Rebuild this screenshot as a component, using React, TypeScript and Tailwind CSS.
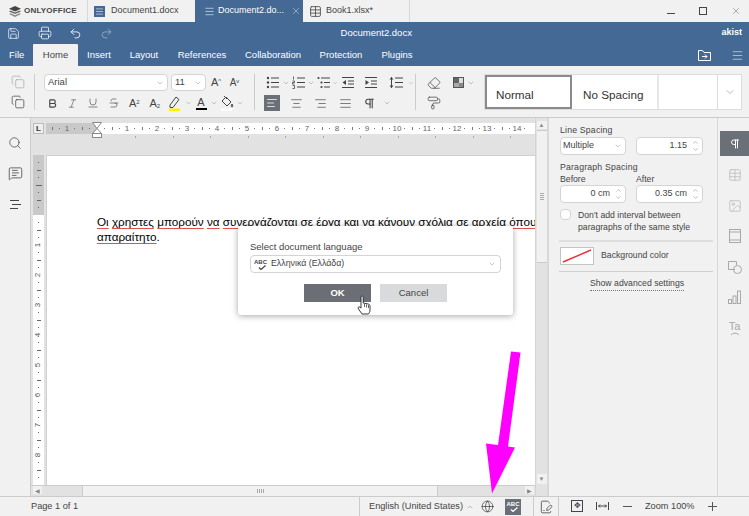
import type { ReactNode } from "react"
import {
  AlignCenter,
  AlignJustify,
  AlignLeft,
  AlignRight,
  Bold,
  ChevronDown,
  ChevronUp,
  Copy,
  Eraser,
  FilePenLine,
  Globe,
  Image,
  Italic,
  Menu,
  MessageSquareText,
  PaintRoller,
  Pilcrow,
  Printer,
  Redo2,
  Save,
  Search,
  Strikethrough,
  Table,
  Underline,
  Undo2,
  X,
} from "lucide-react"

const iconProps = { size: 14, strokeWidth: 1.25, color: "#444" }

function Caret({ className = "" }: { className?: string }) {
  return <ChevronDown size={8} strokeWidth={1.25} color="#777" className={className} />
}

function Cell({ w, children, active }: { w: string; children?: ReactNode; active?: boolean }) {
  return (
    <div className={`flex h-4 shrink-0 items-center justify-center ${w} ${active ? "bg-[#6b7078]" : ""}`}>
      {children}
    </div>
  )
}

function SpellIcon({ light }: { light?: boolean }) {
  const color = light ? "#fff" : "#444"
  return (
    <div className="flex w-[13px] flex-col items-center">
      <span className={`text-[6px] font-bold leading-[6px] ${light ? "text-white" : "text-[#444]"}`}>ABC</span>
      <svg width="8" height="5" viewBox="0 0 8 5" fill="none" stroke={color} strokeWidth="1.2" className="ml-[3px]">
        <path d="M1 2.500L3 4.500L7.500 0.500" />
      </svg>
    </div>
  )
}

function ListIcon({ kind }: { kind: "bullet" | "number" | "multi" | "dec" | "inc" | "spacing" }) {
  return (
    <svg width="14" height="13" viewBox="0 0 14 13" stroke="#444" fill="#444" strokeWidth="1">
      {kind === "bullet" && (
        <>
          <circle cx="2" cy="2" r="1.2" stroke="none" />
          <circle cx="2" cy="6.5" r="1.2" stroke="none" />
          <circle cx="2" cy="11" r="1.2" stroke="none" />
          <path d="M5 2h8M5 6.5h8M5 11h8" />
        </>
      )}
      {kind === "number" && (
        <>
          <path d="M1.5 0.5v3M0.5 5h2v1.5h-2V8h2M0.5 9.5h2V12.5h-2" strokeWidth="0.8" fill="none" />
          <path d="M5 2h8M5 6.5h8M5 11h8" />
        </>
      )}
      {kind === "multi" && (
        <>
          <circle cx="1.5" cy="2" r="1.1" stroke="none" />
          <circle cx="4.5" cy="6.5" r="1.1" stroke="none" />
          <circle cx="4.5" cy="11" r="1.1" stroke="none" />
          <path d="M4 2h9M7 6.5h6M7 11h6" />
        </>
      )}
      {kind === "dec" && (
        <>
          <path d="M1 1.5h12M7 5h6M7 8h6M1 11.5h12" />
          <path d="M5 4v5L1.5 6.5z" stroke="none" />
        </>
      )}
      {kind === "inc" && (
        <>
          <path d="M1 1.5h12M7 5h6M7 8h6M1 11.5h12" />
          <path d="M1.5 4v5L5 6.5z" stroke="none" />
        </>
      )}
      {kind === "spacing" && (
        <>
          <path d="M6 2h8M6 6.5h8M6 11h8M2.5 1v11" />
          <path d="M0.5 3.5L2.5 1l2 2.5zM0.5 9.5L2.5 12l2-2.5z" stroke="none" />
        </>
      )}
    </svg>
  )
}

function Toolbar() {
  return (
    <div className="flex h-[52px] shrink-0 items-start border-b border-[#cbcbcb] bg-[#f1f1f1] pt-2">
      <div className="flex w-[34px] shrink-0 flex-col items-center gap-[4px] pl-0.5">
        <Cell w="w-5"><Copy size={14} strokeWidth={1.25} color="#aaa" /></Cell>
        <Cell w="w-5"><Copy size={14} strokeWidth={1.25} color="#444" /></Cell>
      </div>
      <div className="h-9 w-px shrink-0 bg-[#cbcbcb]" />

      <div className="flex w-[219px] shrink-0 flex-col gap-[4px] pl-[7px]">
        <div className="flex h-[17px] items-center">
          <div className="ml-[2px] flex h-[17px] w-[124px] items-center justify-between rounded-sm border border-[#d4d4d4] bg-white pl-[3px] pr-[3px] text-[9.500px] text-[#444]">
            Arial <Caret />
          </div>
          <div className="ml-[3px] flex h-[17px] w-[35px] items-center justify-between rounded-sm border border-[#d4d4d4] bg-white pl-[3px] pr-[3px] text-[9.500px] text-[#444]">
            11 <Caret />
          </div>
          <Cell w="w-[20px]"><span className="text-[11px] text-[#444]">A<sup className="text-[6px]">^</sup></span></Cell>
          <Cell w="w-[17px]"><span className="text-[10px] text-[#444]">A<sup className="text-[6px]">v</sup></span></Cell>
        </div>
        <div className="flex h-4 items-center">
          <Cell w="w-[20.5px]"><Bold size={11} strokeWidth={2.5} color="#444" /></Cell>
          <Cell w="w-[20.5px]"><Italic {...iconProps} size={11} /></Cell>
          <Cell w="w-[20.5px]"><Underline {...iconProps} size={12} /></Cell>
          <Cell w="w-[20.5px]"><Strikethrough {...iconProps} size={12} /></Cell>
          <Cell w="w-[20.5px]"><span className="text-[11px] text-[#444]">A<sup className="text-[6px]">2</sup></span></Cell>
          <Cell w="w-[20.5px]"><span className="text-[11px] text-[#444]">A<sub className="text-[6px]">2</sub></span></Cell>
          <Cell w="w-[20px]">
            <svg width="14" height="16" viewBox="0 0 14 16" fill="none" stroke="#444">
              <path d="M2 10l6-8 3 2.5-6 8H2z" />
              <rect x="1" y="13.5" width="11" height="2.5" fill="#fff200" stroke="none" />
            </svg>
          </Cell>
          <Cell w="w-[7px]"><Caret /></Cell>
          <Cell w="w-[18px]">
            <div className="flex flex-col items-center text-[11px] leading-[12px] text-[#444]">
              A
              <div className="h-[2px] w-[11px] bg-black" />
            </div>
          </Cell>
          <Cell w="w-[8px]"><Caret /></Cell>
          <Cell w="w-[18px]">
            <svg width="14" height="16" viewBox="0 0 14 16" fill="none" stroke="#444">
              <path d="M6 2l5 5-4 4-5-5z" />
              <path d="M4 1l3 3M12 9c1 1.5 1 3 0 3s-1-1.500 0-3z" />
              <rect x="1" y="13.5" width="11" height="2.5" fill="#fff" stroke="none" />
            </svg>
          </Cell>
          <Cell w="w-[8px]"><Caret /></Cell>
        </div>
      </div>
      <div className="h-9 w-px shrink-0 bg-[#cbcbcb]" />

      <div className="flex w-[160px] shrink-0 flex-col gap-[4px] pl-[9px]">
        <div className="flex h-[17px] items-center">
          <Cell w="w-[17px]"><ListIcon kind="bullet" /></Cell>
          <Cell w="w-[9px]"><Caret /></Cell>
          <Cell w="w-[17px]"><ListIcon kind="number" /></Cell>
          <Cell w="w-[8px]"><Caret /></Cell>
          <Cell w="w-[17px]"><ListIcon kind="multi" /></Cell>
          <Cell w="w-[6px]"><Caret /></Cell>
          <Cell w="w-[20px]"><ListIcon kind="dec" /></Cell>
          <Cell w="w-[25px]"><ListIcon kind="inc" /></Cell>
          <Cell w="w-[25px]"><ListIcon kind="spacing" /></Cell>
          <Cell w="w-[6px]"><Caret /></Cell>
        </div>
        <div className="flex h-4 items-center">
          <Cell w="w-4" active><AlignLeft size={12} strokeWidth={1.5} color="#fff" /></Cell>
          <div className="w-1 shrink-0" />
          <Cell w="w-[24px]"><AlignCenter {...iconProps} size={13} /></Cell>
          <Cell w="w-[25px]"><AlignRight {...iconProps} size={13} /></Cell>
          <Cell w="w-[24px]"><AlignJustify {...iconProps} size={13} /></Cell>
          <Cell w="w-[25px]"><Pilcrow {...iconProps} size={13} strokeWidth={2} /></Cell>
          <Cell w="w-[10px]"><Caret /></Cell>
        </div>
      </div>
      <div className="h-9 w-px shrink-0 bg-[#cbcbcb]" />

      <div className="flex w-[68px] shrink-0 flex-col gap-[4px] pl-[9px]">
        <div className="flex h-[17px] items-center">
          <Cell w="w-[17px]"><Eraser {...iconProps} /></Cell>
          <div className="w-2 shrink-0" />
          <Cell w="w-[17px]">
            <div className="grid size-[11px] grid-cols-2 border border-[#555] bg-white">
              <div className="bg-[#666]" />
              <div className="bg-[#ddd]" />
              <div className="bg-[#aaa]" />
              <div className="bg-[#888]" />
            </div>
          </Cell>
          <Cell w="w-[8px]"><Caret /></Cell>
        </div>
        <div className="flex h-4 items-center">
          <Cell w="w-[17px]"><PaintRoller {...iconProps} /></Cell>
        </div>
      </div>

      <div className="flex h-[36px] w-[258px] shrink-0 border border-[#dcdcdc] bg-white text-[11.700px] text-[#333]">
        <div className="flex w-[87px] items-center border-2 border-[#8a8a8a] pl-[9px] pt-[5px]">Normal</div>
        <div className="flex w-[87px] items-center border-r-2 border-[#e8e8e8] pl-[11px] pt-[5px]">No Spacing</div>
        <div className="w-[59px] border-r border-[#dcdcdc]" />
        <div className="flex flex-1 items-center justify-center">
          <ChevronDown size={12} strokeWidth={1} color="#777" />
        </div>
      </div>
    </div>
  )
}

function Header() {
  return (
    <div className="shrink-0">
      <div className="flex h-[22px] items-stretch bg-[#f1f1f1] text-[9px] text-[#444]">
        <div className="flex w-[88px] items-center gap-[3px] border-r border-[#d8d8d8] pl-[9px] text-[8px] font-bold tracking-[0.2px]">
          <svg width="12" height="11" viewBox="0 0 12 11" fill="#444">
            <path d="M6 0l6 2.700-6 2.700L0 2.700z" />
            <path d="M1.500 4.500L6 6.500l4.500-2L12 5.400 6 8 0 5.400z" opacity="0.8" />
            <path d="M1.500 7.200L6 9.200l4.500-2L12 8.100 6 11 0 8.100z" opacity="0.6" />
          </svg>
          ONLYOFFICE
        </div>
        <div className="flex w-[107px] items-center gap-[6px] pl-[6px]">
          <div className="flex size-[11px] items-center justify-center bg-[#446995]">
            <Menu size={9} color="#fff" strokeWidth={1.5} />
          </div>
          Document1.docx
        </div>
        <div className="flex w-[108px] items-center bg-[#446995] pl-[9px] text-white">
          <Menu size={11} color="#fff" strokeWidth={1.25} />
          <span className="ml-[3px]">Document2.do...</span>
          <X size={10} strokeWidth={1} color="#fff" className="ml-[7px]" />
        </div>
        <div className="flex w-[107px] items-center gap-[4px] border-r border-[#d8d8d8] pl-[6px]">
          <Table size={13} strokeWidth={1.5} color="#444" />
          Book1.xlsx*
        </div>
        <div className="flex flex-1 items-center justify-end gap-[24px] pr-[8px]">
          <div className="mt-[5px] h-px w-2 bg-[#444]" />
          <div className="size-[8px] border border-[#444]" />
          <X size={10} strokeWidth={1} color="#444" />
        </div>
      </div>

      <div className="flex h-[22px] items-center bg-[#446995] text-[9.500px] text-white">
        <div className="flex w-[122px] items-center">
          <div className="-ml-[2px] flex w-8 justify-center"><Save size={13} strokeWidth={1.25} /></div>
          <div className="flex w-8 justify-center"><Printer size={14} strokeWidth={1.25} /></div>
          <div className="flex w-8 justify-center"><Undo2 size={13} strokeWidth={1.5} /></div>
          <div className="flex w-8 justify-center"><Redo2 size={13} strokeWidth={1.5} color="#9db3cc" /></div>
        </div>
        <div className="flex-1 pr-[91px] text-center font-medium">Document2.docx</div>
        <div className="pr-[7px] text-[9px] font-bold">akist</div>
      </div>

      <div className="flex h-[22px] items-end bg-[#446995] pb-0 text-[9.500px] text-white">
        <div className="flex h-[22px] w-[33px] items-center pl-[9px]">File</div>
        <div className="flex h-[22px] w-[45px] items-center justify-center rounded-t-[1px] bg-[#f1f1f1] text-[#444]">Home</div>
        <div className="flex h-[22px] w-[42px] items-center justify-center">Insert</div>
        <div className="flex h-[22px] w-[48px] items-center justify-center">Layout</div>
        <div className="flex h-[22px] w-[68px] items-center justify-center">References</div>
        <div className="flex h-[22px] w-[74px] items-center justify-center">Collaboration</div>
        <div className="flex h-[22px] w-[62px] items-center justify-center">Protection</div>
        <div className="flex h-[22px] w-[50px] items-center justify-center">Plugins</div>
        <div className="flex h-[22px] flex-1 items-center justify-end gap-[20px] pr-[5px]">
          <svg width="13" height="11" viewBox="0 0 13 11" fill="none" stroke="#fff">
            <path d="M0.500 10.500V0.500h4l1.500 2h6.500v8zM4 6.500h5M7 4.500l2 2-2 2" />
          </svg>
          <Menu size={13} strokeWidth={1} />
        </div>
      </div>
    </div>
  )
}

function RulerSlot({ children }: { children?: ReactNode }) {
  return <div className="flex h-[11px] w-[7.500px] shrink-0 items-center justify-center">{children}</div>
}

function Dot() {
  return <div className="size-px bg-[#777]" />
}

function Bar() {
  return <div className="h-[3px] w-px bg-[#777]" />
}

function HorizontalRuler() {
  const units = Array.from({ length: 14 }, (_, i) => i + 1)
  const stops = Array.from({ length: 11 })
  return (
    <div className="relative w-[489px] text-[8px] leading-[11px] text-[#666]">
      <div className="flex h-[11px] overflow-hidden">
        <div className="flex w-[51px] shrink-0 justify-end bg-[#c9c9c9] pr-[3.750px]">
          <RulerSlot><Bar /></RulerSlot>
          <RulerSlot><Dot /></RulerSlot>
          <RulerSlot>1</RulerSlot>
          <RulerSlot><Dot /></RulerSlot>
          <RulerSlot><Bar /></RulerSlot>
          <RulerSlot><Dot /></RulerSlot>
        </div>
        <div className="flex flex-1 overflow-hidden bg-white">
          <div className="flex w-[11.250px] shrink-0 items-center justify-end pr-[3px]"><Dot /></div>
          {units.map((n) => (
            <div key={n} className="flex shrink-0">
              <RulerSlot><Bar /></RulerSlot>
              <RulerSlot><Dot /></RulerSlot>
              <RulerSlot>{n}</RulerSlot>
              <RulerSlot><Dot /></RulerSlot>
            </div>
          ))}
        </div>
      </div>
      <div className="mt-[2px] flex pl-[89px]">
        {stops.map((_, i) => (
          <div key={i} className="w-[37.500px] shrink-0">
            <div className="h-[2px] w-px bg-[#aaa]" />
          </div>
        ))}
      </div>
      <svg className="absolute -top-[1px] left-[46px]" width="10" height="16" viewBox="0 0 10 16" fill="#fff" stroke="#888">
        <path d="M0.500 0.500h9L5 6.500zM5 6.500L9.500 11.500h-9z" />
        <rect x="0.500" y="11.500" width="9" height="4" />
      </svg>
    </div>
  )
}

function VTick({ w }: { w: string }) {
  return (
    <div className="flex h-[7.500px] items-center justify-center">
      <div className={`h-px bg-[#666] ${w}`} />
    </div>
  )
}

function VerticalRuler() {
  const units = Array.from({ length: 8 }, (_, i) => i + 1)
  return (
    <div className="flex h-[330px] w-[11px] shrink-0 flex-col overflow-hidden bg-white">
      <div className="flex h-[60px] shrink-0 flex-col justify-center bg-[#c9c9c9]">
        <VTick w="w-px" />
        <VTick w="w-[4px]" />
        <VTick w="w-px" />
        <VTick w="w-[6px]" />
        <VTick w="w-px" />
        <VTick w="w-[4px]" />
        <VTick w="w-px" />
      </div>
      <div className="flex min-h-0 flex-1 flex-col pt-[4px]">
        {units.map((n) => (
          <div key={n} className="flex flex-col">
            <VTick w="w-px" />
            <VTick w="w-[4px]" />
            <VTick w="w-px" />
            <div className="flex h-[7.500px] items-center justify-center text-[8px] leading-none text-[#555]">
              <span className="-rotate-90">{n}</span>
            </div>
          </div>
        ))}
        <VTick w="w-px" />
        <VTick w="w-[4px]" />
        <VTick w="w-px" />
      </div>
    </div>
  )
}

function Sp({ children }: { children: ReactNode }) {
  return <span className="underline decoration-[#e0524f] underline-offset-2">{children}</span>
}

function Arrow({ children }: { children: ReactNode }) {
  return <div className="flex items-center justify-center bg-[#f1f1f1] text-[6px] leading-none text-[#888]">{children}</div>
}

function Canvas() {
  return (
    <div className="flex min-w-0 flex-1 bg-[#e2e2e2]">
      <div className="flex min-w-0 flex-1 flex-col">
        <div className="flex h-[37px] shrink-0 items-start pl-[2px] pt-[5px]">
          <div className="flex size-[11px] shrink-0 items-center justify-center border border-[#bbb] bg-[#eee] text-[8px] font-bold leading-none text-[#333]">L</div>
          <div className="ml-[2px]">
            <HorizontalRuler />
          </div>
        </div>
        <div className="flex min-h-0 flex-1 pl-[2px]">
          <VerticalRuler />
          <div className="ml-[2px] min-w-0 flex-1 overflow-hidden whitespace-nowrap border-l border-t border-[#d0d0d0] bg-white pl-[50px] pt-[58px] text-[11.700px] leading-[16px] text-black">
            <div>
              <Sp>Οι</Sp> <Sp>χρηστες</Sp> <Sp>μπορούν</Sp> <Sp>να</Sp> <Sp>συνεργάζονται</Sp> <Sp>σε</Sp> <Sp>έργα</Sp> και <Sp>να</Sp> <Sp>κάνουν</Sp> <Sp>σχόλια</Sp> <Sp>σε</Sp> <Sp>αρχεία</Sp> <Sp>όπου</Sp>
            </div>
            <div className="-mt-px">
              <Sp>απαραίτητο</Sp>.
            </div>
          </div>
        </div>
        <div className="flex h-[11px] shrink-0 items-stretch border-t border-[#cbcbcb] pl-[2px] pr-px">
          <div className="w-[9px]"><Arrow><span className="pt-[2px]">◀</span></Arrow></div>
          <div className="w-10" />
          <div className="flex w-[356px] items-center justify-center border-x border-[#cbcbcb] bg-[#f1f1f1]">
            <div className="flex gap-px">
              <div className="h-1 w-px bg-[#aaa]" />
              <div className="h-1 w-px bg-[#aaa]" />
              <div className="h-1 w-px bg-[#aaa]" />
              <div className="h-1 w-px bg-[#aaa]" />
            </div>
          </div>
          <div className="flex-1" />
          <div className="w-[9px]"><Arrow><span className="pt-[2px]">▶</span></Arrow></div>
        </div>
      </div>
      <div className="flex w-3 shrink-0 flex-col items-center border-l border-[#d4d4d4] pb-3 pt-[3px]">
        <div className="flex h-[8px] w-[10px] items-center justify-center bg-[#f1f1f1] text-[6px] leading-none text-[#888]">▲</div>
        <div className="mt-px flex h-[133px] w-[10px] flex-col items-center justify-center gap-px border-y border-[#cbcbcb] bg-[#f1f1f1]">
          <div className="h-px w-1 bg-[#aaa]" />
          <div className="h-px w-1 bg-[#aaa]" />
          <div className="h-px w-1 bg-[#aaa]" />
          <div className="h-px w-1 bg-[#aaa]" />
        </div>
        <div className="flex-1" />
        <div className="flex h-[10px] w-[10px] items-center justify-center bg-[#f1f1f1] text-[6px] leading-none text-[#888]">▼</div>
      </div>
    </div>
  )
}

function Spinner({ value, className = "" }: { value: string; className?: string }) {
  return (
    <div className={`flex h-[18px] items-center justify-end rounded-sm border border-[#d4d4d4] bg-white pr-[3px] text-[9px] text-[#444] ${className}`}>
      {value}
      <div className="ml-[5px] flex flex-col">
        <ChevronUp size={7} strokeWidth={1.25} color="#555" />
        <ChevronDown size={7} strokeWidth={1.25} color="#555" />
      </div>
    </div>
  )
}

function SettingsPanel() {
  return (
    <div className="flex w-[170px] shrink-0 flex-col border-l-2 border-[#d8d8d8] bg-[#f1f1f1] pl-[11px] pr-[3px] pt-[6px] text-[8.700px] text-[#444]">
      <div className="h-[12px] font-medium leading-[12px] tracking-[0.2px]">Line Spacing</div>
      <div className="mt-[1px] flex gap-[10px]">
        <div className="flex h-[18px] w-[66px] items-center justify-between rounded-sm border border-[#d4d4d4] bg-white pl-[2px] pr-[3px] text-[9px]">
          Multiple <Caret />
        </div>
        <Spinner value="1.15" className="w-[67px]" />
      </div>
      <div className="mt-[6px] h-[12px] font-medium leading-[12px] tracking-[0.2px]">Paragraph Spacing</div>
      <div className="flex gap-[10px]">
        <div className="w-[66px]">
          <div className="h-[12px] leading-[12px]">Before</div>
          <Spinner value="0 cm" />
        </div>
        <div className="w-[67px]">
          <div className="h-[12px] leading-[12px]">After</div>
          <Spinner value="0.35 cm" />
        </div>
      </div>
      <div className="mt-[6px] flex gap-[7px]">
        <div className="size-[11px] shrink-0 rounded-sm border border-[#d4d4d4] bg-white" />
        <div className="leading-[12px]">
          Don't add interval between
          <br />
          paragraphs of the same style
        </div>
      </div>
      <div className="-ml-[1px] mt-[7px] h-[2px] w-[154px] bg-[#dedede]" />
      <div className="mt-[5px] flex items-center gap-[7px]">
        <div className="h-[18px] w-[34px] border border-[#c4c4c4] bg-white p-[1px]">
          <svg className="block h-full w-full" viewBox="0 0 30 14">
            <path d="M1 13L29 1" stroke="#f0323c" strokeWidth="1.500" />
          </svg>
        </div>
        Background color
      </div>
      <div className="-ml-[1px] mt-[6px] h-px w-[154px] bg-[#cfcfcf]" />
      <div className="mt-[5px] flex w-[154px] justify-center">
        <span className="border-b border-dotted border-[#777] leading-[13px]">Show advanced settings</span>
      </div>
    </div>
  )
}

function RightTabs() {
  const c = "#a8a8a8"
  return (
    <div className="flex w-[32px] shrink-0 flex-col items-center border-l border-[#d8d8d8] bg-[#f1f1f1] pl-[2px] pt-[13px]">
      <div className="flex h-[25px] w-[30px] items-center justify-center bg-[#6b7078]">
        <Pilcrow size={12} strokeWidth={2} color="#fff" />
      </div>
      <div className="mt-[12px] flex flex-col items-center gap-[16.600px]">
        <Table size={14} strokeWidth={1} color={c} />
        <Image size={14} strokeWidth={1} color={c} />
        <svg width="12" height="14" viewBox="0 0 12 14" fill="none" stroke={c}>
          <rect x="0.500" y="0.500" width="11" height="13" />
          <path d="M0.500 3h11M0.500 11h11" />
        </svg>
        <svg width="14" height="14" viewBox="0 0 14 14" fill="none" stroke={c}>
          <path d="M7 9.500H0.500V1.500h8V5" />
          <circle cx="9.500" cy="9.500" r="4" />
        </svg>
        <svg width="13" height="14" viewBox="0 0 13 14" fill="none" stroke={c}>
          <rect x="0.500" y="9.500" width="3" height="4" />
          <rect x="5" y="6" width="3" height="7.500" />
          <rect x="9.500" y="1" width="3" height="12.500" />
        </svg>
        <div className="flex flex-col items-center text-[11px] leading-[11px] text-[#a8a8a8]">
          Ta
          <svg width="10" height="3" viewBox="0 0 10 3" fill="none" stroke={c}>
            <path d="M1 3C3 0.500 7 0.500 9 3" />
          </svg>
        </div>
      </div>
    </div>
  )
}

function StatusBar() {
  return (
    <div className="flex h-5 shrink-0 items-center border-t border-[#cbcbcb] bg-[#f1f1f1] text-[9.200px] text-[#444]">
      <div className="w-[360px] shrink-0 border-r border-[#cbcbcb] pl-[31px] leading-[19px]">Page 1 of 1</div>
      <div className="flex w-[173px] shrink-0 items-center pl-[9px]">
        English (United States)
        <ChevronUp size={8} strokeWidth={1.25} color="#777" className="ml-[3px]" />
        <Globe size={13} strokeWidth={1.25} color="#333" className="ml-[7.500px]" />
        <div className="ml-[10.500px] flex h-4 w-4 items-center justify-center bg-[#6b7078]">
          <SpellIcon light />
        </div>
      </div>
      <div className="flex h-[19px] w-[26px] shrink-0 items-center justify-center border-x border-[#cbcbcb]">
        <FilePenLine size={14} strokeWidth={1.25} color="#333" />
      </div>
      <div className="flex flex-1 items-center pl-[12px]">
        <div className="flex size-[12px] items-center justify-center border border-[#444] text-[8px] leading-none">✥</div>
        <svg className="ml-[13px]" width="13" height="10" viewBox="0 0 13 10" fill="none" stroke="#444">
          <path d="M0.500 1v8M12.500 1v8M2.500 5h8M4 3.500L2.500 5 4 6.500M9 3.500L10.500 5 9 6.500" />
        </svg>
        <div className="ml-[14px] h-px w-[9px] bg-[#555]" />
        <span className="ml-[13px]">Zoom 100%</span>
        <svg className="ml-[13.500px]" width="9" height="9" viewBox="0 0 9 9" stroke="#555">
          <path d="M0 4.500h9M4.500 0v9" />
        </svg>
      </div>
    </div>
  )
}

function LanguageDialog() {
  return (
    <div className="absolute left-[238px] top-[226px] h-[89px] w-[275px] rounded-[3px] bg-white px-3 pt-[15px] text-[9.500px] text-[#444] shadow-[0_1px_6px_rgba(0,0,0,0.35)]">
      <div className="h-[14px] leading-[12px]">Select document language</div>
      <div className="flex h-[18px] items-center justify-between rounded-sm border border-[#d4d4d4] pl-[3px] pr-[4px] text-[8.800px]">
        <div className="flex items-center gap-[4px]">
          <SpellIcon />
          Ελληνικά (Ελλάδα)
        </div>
        <Caret />
      </div>
      <div className="mt-[11px] flex justify-center gap-[9px]">
        <div className="flex h-[18px] w-[67px] items-center justify-center bg-[#6b6e75] font-bold text-white">OK</div>
        <div className="flex h-[18px] w-[67px] items-center justify-center bg-[#d8dadc]">Cancel</div>
      </div>
    </div>
  )
}

export default function App() {
  return (
    <div className="relative flex h-[516px] w-[749px] flex-col overflow-hidden font-['Liberation_Sans',Arial,sans-serif]">
      <Header />
      <Toolbar />
      <div className="flex min-h-0 flex-1">
        <div className="flex w-[31px] shrink-0 flex-col items-center border-r border-[#cbcbcb] bg-[#f1f1f1] pt-[18px]">
          <Search size={14} strokeWidth={1.25} color="#444" />
          <MessageSquareText size={15} strokeWidth={1.25} color="#444" className="mt-[16px]" />
          <svg className="mt-[18px]" width="12" height="11" viewBox="0 0 12 11" stroke="#444" strokeWidth="1">
            <path d="M1 1.500h9M3 5.500h9M1 9.500h8" />
          </svg>
        </div>
        <Canvas />
        <SettingsPanel />
        <RightTabs />
      </div>
      <StatusBar />
      <LanguageDialog />
      {/* hand pointer over OK */}
      <svg className="absolute left-[357px] top-[295px]" width="14" height="20" viewBox="0 0 14 20" fill="#fff" stroke="#222" strokeWidth="0.9">
        <path d="M4 10V2.200c0-1.600 2.200-1.600 2.200 0V8l5 1c1.300.3 1.800 1 1.800 2.200V15c0 2-1 3-1.500 4H5L1.500 14c-1-1.300-.2-2.500 1-2l1.500 1z" />
        <path d="M7.500 9v3M9.500 9.500v3M11.500 10v3" strokeWidth="0.7" />
      </svg>
      {/* annotation arrow */}
      <svg className="pointer-events-none absolute inset-0" width="749" height="516" viewBox="0 0 749 516">
        <path d="M511 351.500L520.500 352.500L508 446.500L515 447.500L492 493.500L486 443.500L498 445z" fill="#ff00ff" />
      </svg>
    </div>
  )
}
